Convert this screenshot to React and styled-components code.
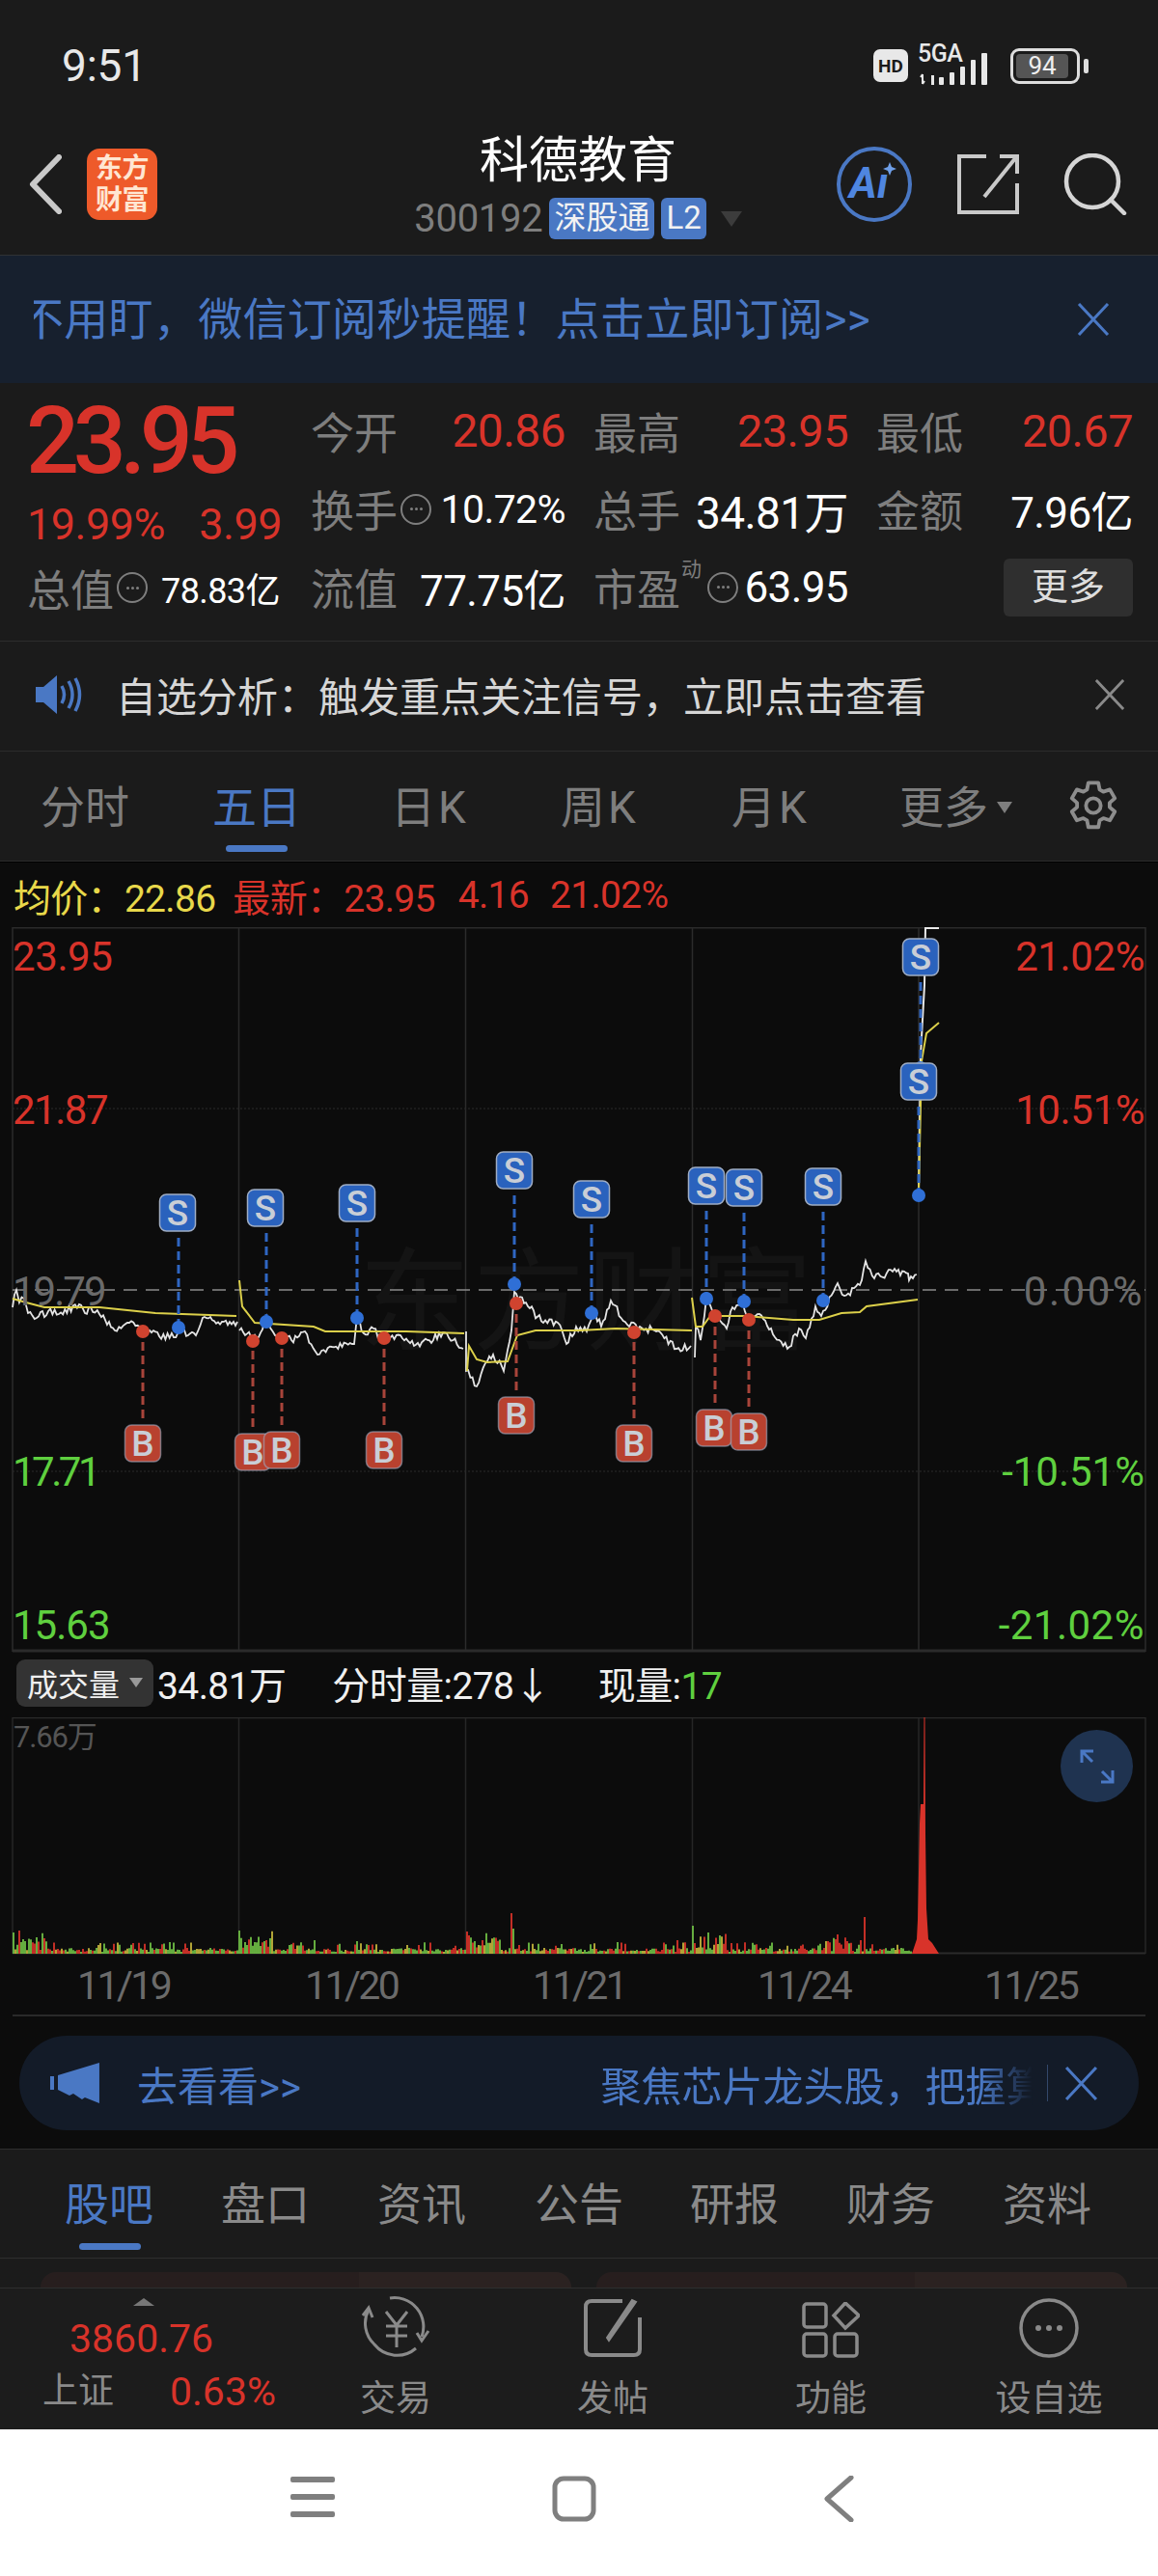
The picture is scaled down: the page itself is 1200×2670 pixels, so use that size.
import React from "react";
import styled, { createGlobalStyle } from "styled-components";

const RED = "#d8332a";
const GREY = "#7e7e7e";
const BLUE = "#4a78c4";
const GREEN = "#5fd03f";
const BAR_GREEN = "#6fbf45";

const Global = createGlobalStyle`
  html, body { margin: 0; padding: 0; background: #fff; }
  * { box-sizing: border-box; }
  body { font-family: Roboto, "Noto Sans CJK SC", sans-serif; }
`;

/* ---------- chart data ---------- */

const rng = (seed) => () => {
  seed = (seed * 16807) % 2147483647;
  return seed / 2147483647;
};

const whiteDays = [
  [[13,1355],[17,1337],[20,1350],[25,1346],[29,1361],[38,1366],[50,1359],[61,1362],[82,1352],[88,1361],[94,1355],[103,1362],[119,1379],[134,1371],[149,1377],[165,1385],[180,1386],[187,1377],[195,1384],[205,1380],[210,1366],[230,1370],[246,1370]],
  [[248,1379],[254,1384],[268,1386],[276,1364],[285,1384],[302,1389],[316,1380],[329,1404],[344,1396],[367,1393],[370,1364],[377,1382],[387,1377],[398,1389],[415,1384],[429,1395],[463,1382],[480,1398]],
  [[483,1380],[483,1421],[494,1437],[505,1411],[511,1404],[522,1421],[530,1379],[533,1339],[547,1354],[563,1371],[578,1371],[587,1393],[597,1375],[608,1380],[615,1359],[623,1375],[633,1348],[650,1373],[663,1375],[680,1380],[701,1398],[716,1395]],
  [[720,1407],[721,1375],[726,1389],[732,1345],[742,1361],[753,1377],[759,1355],[770,1352],[776,1371],[787,1362],[803,1386],[818,1396],[828,1377],[835,1387],[845,1354],[851,1364],[868,1330],[875,1343],[891,1332],[897,1307],[906,1325],[925,1318],[941,1320],[942,1327],[950,1321]],
];

const jagged = (points, seed) => {
  const r = rng(seed);
  const out = [];
  points.forEach((p, i) => {
    out.push(p);
    const next = points[i + 1];
    if (!next) return;
    const steps = Math.floor((next[0] - p[0]) / 2);
    for (let s = 1; s < steps; s++) {
      const t = s / steps;
      out.push([p[0] + (next[0] - p[0]) * t, p[1] + (next[1] - p[1]) * t + (r() - 0.5) * 8]);
    }
  });
  return out.map((p) => p.map((n) => n.toFixed(1)).join(",")).join(" ");
};

const yellowLines = [
  "13,1346 27,1350 46,1355 103,1355 161,1361 245,1364",
  "248,1327 251,1354 264,1371 325,1375 337,1380 421,1380 481,1382",
  "484,1421 486,1395 494,1409 505,1412 526,1411 536,1384 555,1379 600,1379 638,1377 717,1379",
  "717,1345 721,1375 728,1375 736,1364 772,1364 822,1368 849,1368 872,1361 891,1360 898,1354 951,1347",
  "952,1236 955,1100 960,1071 973,1060",
];

const sells = [
  [184,1257,185,1376],[275,1252,276,1370],[370,1247,370,1366],[533,1213,533,1331],[613,1243,613,1361],
  [732,1229,732,1346],[771,1231,771,1349],[853,1230,853,1348],[954,992,954,1107],[952,1121,952,1239],
];
const buys = [
  [148,1496,148,1380],[262,1505,262,1390],[292,1503,292,1387],[398,1503,398,1387],
  [535,1467,535,1351],[657,1496,657,1381],[740,1480,741,1364],[776,1484,776,1368],
];

const volumePeaks = {
  14: [22, BAR_GREEN], 26: [13, BAR_GREEN], 248: [24, BAR_GREEN], 254: [12, BAR_GREEN], 326: [14, BAR_GREEN], 370: [13, BAR_GREEN],
  484: [23, RED], 492: [13, BAR_GREEN], 530: [42, RED], 532: [26, BAR_GREEN], 718: [29, BAR_GREEN], 702: [14, RED],
  734: [22, BAR_GREEN], 868: [20, RED], 896: [38, RED], 892: [14, RED],
};

const volumeBars = () => {
  const r = rng(77);
  const bars = [];
  for (let x = 14; x < 945; x += 2) {
    const peak = volumePeaks[x];
    const day = [14, 248, 484, 717, 850].find((d) => x >= d && x < d + 36);
    const lift = day ? 14 : 0;
    const h = peak ? peak[0] : 2 + r() * 4 + (r() > 0.82 ? 6 : 0) + r() * lift;
    const color = peak ? peak[1] : r() > 0.62 ? RED : r() > 0.3 ? BAR_GREEN : "#c4b53c";
    bars.push({ x, h, color });
  }
  return bars;
};

/* ---------- layout ---------- */

const Page = styled.div`
  width: 1200px;
  height: 2670px;
  overflow: hidden;
  background: #1b1b1b;
  color: #fff;
`;

const StatusBar = styled.div`
  height: 130px;
  padding: 6px 81px 0 64px;
  display: flex;
  align-items: center;
  justify-content: space-between;
`;
const Clock = styled.span`
  font-size: 46px;
  color: #e8e8e8;
  letter-spacing: -0.2px;
`;
const StatusIcons = styled.div`
  display: flex;
  align-items: center;
  gap: 10px;
`;
const HdBadge = styled.span`
  width: 36px;
  height: 34px;
  border-radius: 7px;
  background: #e8e8e8;
  color: #1b1b1b;
  font-size: 19px;
  font-weight: 700;
  display: flex;
  align-items: center;
  justify-content: center;
`;
const Signal = styled.div`
  width: 80px;
  height: 40px;
  position: relative;
`;
const SignalLabel = styled.span`
  position: absolute;
  left: 0;
  top: -5px;
  font-size: 25px;
  font-weight: 500;
  color: #e8e8e8;
  line-height: 26px;
  letter-spacing: -0.5px;
`;
const SignalSvg = styled.svg`
  position: absolute;
  left: 2px;
  top: 6px;
`;
const Battery = styled.div`
  width: 72px;
  height: 37px;
  margin-left: 6px;
  border: 3px solid #ddd;
  border-radius: 9px;
  padding: 3px;
  position: relative;
  &::after {
    content: "";
    position: absolute;
    right: -12px;
    top: 8px;
    width: 5px;
    height: 15px;
    border-radius: 2px;
    background: #ddd;
  }
`;
const BatteryFill = styled.div`
  width: 54px;
  height: 100%;
  border-radius: 4px;
  background: #555;
  color: #eee;
  font-size: 26px;
  line-height: 25px;
  text-align: center;
`;

const Header = styled.header`
  height: 135px;
  padding: 0 32px 13px 30px;
  display: grid;
  grid-template-columns: 1fr auto 1fr;
  align-items: center;
  border-bottom: 1px solid #303234;
`;
const HeaderLeft = styled.div`
  display: flex;
  align-items: center;
  gap: 26px;
`;
const Logo = styled.div`
  width: 73px;
  height: 74px;
  border-radius: 13px;
  background: #ee5a2a;
  color: #ffe6d2;
  font-size: 28px;
  font-weight: 700;
  line-height: 33px;
  text-align: center;
  padding-top: 4px;
  letter-spacing: -0.5px;
`;
const TitleBlock = styled.div`
  display: flex;
  flex-direction: column;
  align-items: center;
  padding-top: 6px;
`;
const Title = styled.div`
  font-size: 51px;
  line-height: 62px;
  color: #fff;
  margin-top: -2px;
`;
const CodeRow = styled.div`
  display: flex;
  align-items: center;
  gap: 7px;
  height: 46px;
  margin-top: 6px;
`;
const Code = styled.span`
  font-size: 40px;
  color: ${GREY};
  letter-spacing: -0.3px;
`;
const Tag = styled.span`
  height: 43px;
  padding: 0 5px;
  border-radius: 6px;
  background: ${BLUE};
  color: #f2f2f2;
  font-size: 33px;
  line-height: 42px;
`;
const Caret = styled.span`
  width: 0;
  height: 0;
  margin-left: ${(p) => p.$gap || 0}px;
  border-left: ${(p) => p.$size}px solid transparent;
  border-right: ${(p) => p.$size}px solid transparent;
  border-top: ${(p) => p.$size * 1.5}px solid ${(p) => p.$color};
`;
const HeaderRight = styled.div`
  display: flex;
  align-items: center;
  justify-content: flex-end;
  gap: 46px;
`;

const SubscribeBar = styled.div`
  height: 132px;
  background: #17202e;
  padding: 0 50px 0 35px;
  display: flex;
  align-items: center;
  justify-content: space-between;
`;
const SubscribeClip = styled.div`
  width: 900px;
  overflow: hidden;
  white-space: nowrap;
`;
const SubscribeText = styled.div`
  margin-left: -15px;
  font-size: 46px;
  line-height: 60px;
  letter-spacing: 0.3px;
  color: ${BLUE};
`;

const Stats = styled.section`
  height: 268px;
  padding: 3px 26px 0 28px;
  display: flex;
  border-bottom: 1px solid #2c2c2c;
`;
const Quote = styled.div`
  width: 294px;
  padding-right: 30px;
  display: flex;
  flex-direction: column;
`;
const BigPrice = styled.div`
  font-size: 97px;
  font-weight: 500;
  line-height: 114px;
  height: 114px;
  margin-left: -1px;
  color: ${RED};
  letter-spacing: -6.5px;
`;
const ChangeRow = styled.div`
  display: flex;
  justify-content: space-between;
  font-size: 45px;
  line-height: 60px;
  height: 60px;
  color: ${RED};
  letter-spacing: -0.5px;
`;
const TotalRow = styled.div`
  display: flex;
  align-items: center;
  gap: 14px;
  height: 70px;
`;
const StatGrid = styled.div`
  flex: 1;
  display: grid;
  grid-template-columns: 264px 264px 266px;
  column-gap: 29px;
  grid-auto-rows: 81px;
  padding-top: 6px;
`;
const Stat = styled.div`
  display: flex;
  align-items: center;
  justify-content: ${(p) => (p.$end ? "flex-end" : "space-between")};
`;
const StatLabel = styled.span`
  display: flex;
  align-items: center;
  font-size: 45px;
  color: ${GREY};
  white-space: nowrap;
  position: relative;
`;
const StatValue = styled.span`
  font-size: ${(p) => p.$size || 44}px;
  color: ${(p) => p.$color || "#fff"};
  letter-spacing: -0.6px;
  white-space: nowrap;
`;
const Superscript = styled.sup`
  position: absolute;
  left: 91px;
  top: 2px;
  font-size: 21px;
  line-height: 24px;
`;
const DotCircle = styled.span`
  width: 32px;
  height: 32px;
  margin-left: ${(p) => p.$gap || 3}px;
  border: 2px solid ${GREY};
  border-radius: 50%;
  flex: none;
  display: inline-flex;
  align-items: center;
  justify-content: center;
  &::before {
    content: "";
    width: 3px;
    height: 3px;
    border-radius: 50%;
    background: ${GREY};
    box-shadow: -5px 0 ${GREY}, 5px 0 ${GREY};
  }
`;
const MoreButton = styled.div`
  width: 134px;
  height: 60px;
  border-radius: 6px;
  background: #2f2f2f;
  color: #ddd;
  font-size: 38px;
  line-height: 58px;
  text-align: center;
`;

const Notice = styled.div`
  height: 114px;
  padding: 0 34px 4px 37px;
  display: flex;
  align-items: center;
  border-bottom: 1px solid #2c2c2c;
`;
const NoticeText = styled.span`
  margin-left: 35px;
  flex: 1;
  font-size: 42px;
  color: #d6d6d6;
`;

const PeriodTabs = styled.nav`
  height: 114px;
  position: relative;
  border-bottom: 1px solid #2c2c2c;
`;
const PeriodTab = styled.span`
  position: absolute;
  left: ${(p) => p.$x}px;
  top: 29px;
  font-size: 46px;
  line-height: 58px;
  letter-spacing: ${(p) => (p.$wide ? 3 : 0)}px;
  color: ${(p) => (p.$active ? BLUE : GREY)};
  white-space: nowrap;
  display: flex;
  align-items: center;
`;
const Underline = styled.span`
  position: absolute;
  left: ${(p) => p.$x}px;
  bottom: ${(p) => p.$bottom}px;
  width: 64px;
  height: 7px;
  border-radius: 4px;
  background: ${BLUE};
`;
const GearSlot = styled.span`
  position: absolute;
  left: 1106px;
  top: 28px;
`;

const ChartPanel = styled.section`
  height: 1334px;
  background: #0c0c0c;
  border-top: 1px solid #000;
`;
const Legend = styled.div`
  height: 67px;
  padding: 1px 0 0 14px;
  display: flex;
  align-items: center;
  font-size: 39px;
  letter-spacing: -0.7px;
  white-space: nowrap;
`;
const LegendItem = styled.span`
  color: ${(p) => p.$color};
  margin-right: ${(p) => p.$gap || 0}px;
`;
const PriceChart = styled.div`
  height: 752px;
  position: relative;
`;
const ChartSvg = styled.svg`
  display: block;
  width: 1200px;
  height: 100%;
  font-family: Roboto, "Noto Sans CJK SC", sans-serif;
`;
const AxisLabel = styled.span`
  position: absolute;
  top: ${(p) => p.$y}px;
  ${(p) => (p.$right ? "right: 14px;" : "left: 13px;")}
  font-size: 42px;
  line-height: 44px;
  letter-spacing: ${(p) => p.$track ?? -0.4}px;
  color: ${(p) => p.$color};
`;
const VolumeHead = styled.div`
  height: 67px;
  padding: 0 0 5px 17px;
  display: flex;
  align-items: center;
  font-size: 39px;
  color: #f0f0f0;
  letter-spacing: -0.6px;
  white-space: nowrap;
`;
const VolumePill = styled.span`
  width: 142px;
  height: 49px;
  border-radius: 9px;
  background: #333;
  font-size: 32px;
  letter-spacing: 0;
  padding-left: 11px;
  margin-right: 4px;
  display: flex;
  align-items: center;
`;
const VolumeItem = styled.span`
  margin-right: ${(p) => p.$gap}px;
`;
const VolumeNow = styled.span`
  color: ${GREEN};
`;
const VolumeChart = styled.div`
  height: 246px;
  position: relative;
`;
const VolumeMax = styled.span`
  position: absolute;
  left: 14px;
  top: -5px;
  font-size: 31px;
  letter-spacing: -1.2px;
  color: #555;
`;
const ExpandButton = styled.span`
  position: absolute;
  left: 1099px;
  top: 13px;
  width: 75px;
  height: 75px;
  border-radius: 50%;
  background: #1f3350;
  display: flex;
  align-items: center;
  justify-content: center;
`;
const DateRow = styled.div`
  height: 64px;
  margin: 0 13px;
  border-bottom: 2px solid #2a2a2a;
  position: relative;
`;
const DateLabel = styled.span`
  position: absolute;
  left: ${(p) => p.$x - 13}px;
  top: 8px;
  font-size: 41px;
  line-height: 48px;
  letter-spacing: -2.6px;
  color: #6b6b6b;
`;
const AdPill = styled.div`
  height: 98px;
  margin: 20px 20px 19px;
  padding: 0 42px 0 32px;
  border-radius: 49px;
  background: #131b28;
  display: flex;
  align-items: center;
`;
const AdLink = styled.span`
  margin-left: 38px;
  width: 481px;
  font-size: 42px;
  color: ${BLUE};
`;
const AdClip = styled.div`
  width: 448px;
  overflow: hidden;
  white-space: nowrap;
  font-size: 42px;
  color: ${BLUE};
  mask-image: linear-gradient(to right, #000 88%, transparent);
`;
const AdDivider = styled.span`
  width: 1px;
  height: 38px;
  margin: 0 17px 0 15px;
  background: #33486a;
`;

const InfoTabs = styled.nav`
  height: 114px;
  position: relative;
  border-top: 1px solid #2e2e2e;
  border-bottom: 1px solid #2e2e2e;
`;
const InfoTab = styled.span`
  position: absolute;
  left: ${(p) => p.$x}px;
  top: 28px;
  font-size: 46px;
  line-height: 58px;
  color: ${(p) => (p.$active ? BLUE : "#8a8a8a")};
`;
const CardPeek = styled.div`
  height: 30px;
  padding: 14px 32px 0 42px;
  display: flex;
  gap: 26px;
`;
const PeekCard = styled.div`
  flex: 1;
  border-radius: 26px 26px 0 0;
  background: linear-gradient(to right, #271e1e 60%, #2b2221 60%);
`;
const BottomBar = styled.footer`
  height: 147px;
  background: #1c1c1c;
  border-top: 1px solid #2e2e2e;
  position: relative;
  display: flex;
`;
const IndexBlock = styled.div`
  width: 334px;
  flex: none;
  position: relative;
`;
const IndexArrow = styled.span`
  position: absolute;
  left: 138px;
  top: 10px;
  border-left: 11px solid transparent;
  border-right: 11px solid transparent;
  border-bottom: 8px solid #777;
`;
const IndexValue = styled.span`
  position: absolute;
  left: 72px;
  top: 27px;
  font-size: 41px;
  line-height: 50px;
  color: ${RED};
`;
const IndexName = styled.span`
  position: absolute;
  left: 44px;
  top: 84px;
  font-size: 37px;
  line-height: 46px;
  color: #8a8a8a;
`;
const IndexPct = styled.span`
  position: absolute;
  left: 176px;
  top: 84px;
  font-size: 41px;
  line-height: 46px;
  color: ${RED};
`;
const ActionItem = styled.div`
  position: absolute;
  left: ${(p) => p.$x}px;
  top: -3px;
  width: 200px;
  margin-left: -100px;
  display: flex;
  flex-direction: column;
  align-items: center;
  font-size: 37px;
  color: #8a8a8a;
`;
const ActionIcon = styled.span`
  height: 87px;
  display: flex;
  align-items: flex-end;
  padding-bottom: 12px;
`;
const SystemNav = styled.div`
  height: 153px;
  background: #fff;
  position: relative;
`;
const NavSlot = styled.span`
  position: absolute;
  left: ${(p) => p.$x}px;
  top: ${(p) => p.$y}px;
  display: flex;
`;

/* ---------- drawings ---------- */

const Cross = ({ size, color, width = 3 }) => (
  <svg width={size} height={size} viewBox="0 0 34 34" fill="none" stroke={color} strokeWidth={width}>
    <path d="M2 1 L32 33 M32 1 L2 33" />
  </svg>
);

const BackIcon = () => (
  <svg width="34" height="62" viewBox="0 0 34 62" fill="none" stroke="#c9c9c9" strokeWidth="6" strokeLinecap="round" strokeLinejoin="round">
    <path d="M31 3 L4 31 L31 59" />
  </svg>
);

const AiIcon = () => (
  <svg width="80" height="80" viewBox="0 0 80 80">
    <circle cx="40" cy="40" r="37" fill="none" stroke={BLUE} strokeWidth="4" />
    <text x="14" y="54" fontSize="44" fontWeight="700" fontStyle="italic" fill="#4f86e0" fontFamily="Roboto">Aı</text>
    <path d="M56 17 l2 5 l5 2 l-5 2 l-2 5 l-2 -5 l-5 -2 l5 -2z" fill="#6f9fe8" />
  </svg>
);

const ShareIcon = () => (
  <svg width="64" height="62" viewBox="0 0 64 62" fill="none" stroke="#c9c9c9" strokeWidth="4">
    <path d="M30 2 H2 V60 H62 V30 M62 20 V2 H44 M61 3 L28 44" />
  </svg>
);

const SearchIcon = () => (
  <svg width="66" height="64" viewBox="0 0 66 64" fill="none" stroke="#d5d5d5" strokeWidth="4.5" strokeLinecap="round">
    <circle cx="30" cy="29" r="27" />
    <path d="M49 48 L63 62" />
  </svg>
);

const SignalBars = () => (
  <SignalSvg width="78" height="36" viewBox="0 0 78 36" fill="#e8e8e8">
    <path d="M3 23 v10 M3 23 l-2 3 M3 33 l2 -3" stroke="#e8e8e8" strokeWidth="2" />
    <rect x="12" y="24" width="3" height="10" />
    <rect x="20" y="26" width="5" height="8" rx="1" />
    <rect x="31" y="21" width="5" height="13" rx="1" />
    <rect x="42" y="15" width="5" height="19" rx="1" />
    <rect x="53" y="8" width="5" height="26" rx="1" />
    <rect x="64" y="1" width="6" height="33" rx="1" />
  </SignalSvg>
);

const SpeakerIcon = () => (
  <svg width="48" height="40" viewBox="0 0 48 40" fill={BLUE}>
    <path d="M0 12 H8 L22 0 V40 L8 28 H0 Z" />
    <path d="M27 11 Q32 20 27 29 M34 6 Q42 20 34 34 M41 3 Q50 20 41 37" fill="none" stroke={BLUE} strokeWidth="3.5" />
  </svg>
);

const GearIcon = () => (
  <svg width="54" height="56" viewBox="0 0 24 24" fill="none" stroke="#8d8d8d" strokeWidth="1.7" strokeLinejoin="round">
    <path d="M9.7 1.5h4.6l.6 3.1 1.7 1 3-1 2.3 4-2.4 2.1v2l2.4 2.1-2.3 4-3-1-1.7 1-.6 3.1H9.7l-.6-3.1-1.7-1-3 1-2.3-4 2.4-2.1v-2L2.1 8.6l2.3-4 3 1 1.7-1z" />
    <circle cx="12" cy="12" r="3.4" />
  </svg>
);

const ExpandIcon = () => (
  <svg width="38" height="38" viewBox="0 0 38 38" fill="none" stroke={BLUE} strokeWidth="3">
    <path d="M3 15 V3 H15 M3 3 L14 14 M35 23 V35 H23 M35 35 L24 24" />
  </svg>
);

const MegaphoneIcon = () => (
  <svg width="52" height="42" viewBox="0 0 52 42" fill={BLUE}>
    <rect x="0" y="14" width="4" height="14" />
    <path d="M8 13 L51 0 V42 L36 36 L33 38 L24 32 L20 34 L8 28 Z" />
  </svg>
);

const TradeIcon = () => (
  <svg width="72" height="64" viewBox="0 0 72 64" fill="none" stroke="#8a8a8a" strokeWidth="3">
    <path d="M30 2 A30 30 0 0 1 63 42 M57 54 A30 30 0 0 1 14 50 A30 30 0 0 1 8 14" />
    <path d="M2 20 L8 12 L12 22 M70 36 L63 46 L58 38" />
    <path d="M26 16 L37 30 L48 16 M26 31 H48 M26 41 H48 M37 30 V53" />
  </svg>
);

const PostIcon = () => (
  <svg width="60" height="62" viewBox="0 0 60 62" fill="none" stroke="#8a8a8a" strokeWidth="4">
    <path d="M40 3 H8 Q2 3 2 9 V53 Q2 59 8 59 H52 Q58 59 58 53 V20" />
    <path d="M54 4 L26 44 L24 41 L50 2 Z" fill="#8a8a8a" strokeWidth="2" />
  </svg>
);

const AppsIcon = () => (
  <svg width="60" height="58" viewBox="0 0 60 58" fill="none" stroke="#8a8a8a" strokeWidth="3.5">
    <rect x="2" y="2" width="23" height="24" rx="3" />
    <path d="M45 1 L59 14 L45 27 L33 14 Z" />
    <rect x="2" y="33" width="23" height="23" rx="3" />
    <rect x="34" y="33" width="23" height="23" rx="3" />
  </svg>
);

const MoreIcon = () => (
  <svg width="62" height="62" viewBox="0 0 62 62" fill="none" stroke="#8a8a8a" strokeWidth="3.5">
    <circle cx="31" cy="31" r="29" />
    <g fill="#8a8a8a" stroke="none">
      <circle cx="20" cy="31" r="3" />
      <circle cx="31" cy="31" r="3" />
      <circle cx="42" cy="31" r="3" />
    </g>
  </svg>
);

const Menu = () => (
  <svg width="46" height="48" viewBox="0 0 46 48" fill="#7f7f7f">
    <rect y="0" width="46" height="6" rx="2" />
    <rect y="18" width="46" height="6" rx="2" />
    <rect y="36" width="46" height="6" rx="2" />
  </svg>
);
const HomeKey = () => (
  <svg width="46" height="48" viewBox="0 0 46 48" fill="none" stroke="#7f7f7f" strokeWidth="5">
    <rect x="3" y="3" width="40" height="42" rx="9" />
  </svg>
);
const BackKey = () => (
  <svg width="32" height="48" viewBox="0 0 32 48" fill="none" stroke="#7f7f7f" strokeWidth="5" strokeLinecap="round" strokeLinejoin="round">
    <path d="M29 2 L4 24 L29 46" />
  </svg>
);

const Marker = ({ item, kind }) => {
  const [bx, by, dx, dy] = item;
  const sell = kind === "S";
  const fill = sell ? "#2a62bd" : "#b8412f";
  const line = sell ? "#2f66c2" : "#a8443a";
  const from = sell ? by + 26 : by - 26;
  return (
    <g>
      <line x1={dx} y1={from} x2={dx} y2={dy} stroke={line} strokeWidth="3" strokeDasharray="9 5" />
      <circle cx={dx} cy={dy} r="7" fill={sell ? "#2f6fd6" : "#d0432f"} />
      <rect x={bx - 18.5} y={by - 19} width="37" height="38" rx="7" fill={fill} stroke="#9fadc4" strokeOpacity={sell ? 1 : 0.6} strokeWidth="1.5" />
      <text x={bx} y={by + 13} textAnchor="middle" fontSize="37" fontWeight="500" fill="#c9ced6">{kind}</text>
    </g>
  );
};

const gridX = [13, 247.5, 482.5, 717.5, 952, 1187];

const PriceLines = () => (
  <ChartSvg viewBox="0 961 1200 752">
    <text x="372" y="1390" fontSize="116" fill="#141414" letterSpacing="2">东方财富</text>
    {gridX.map((x) => (
      <line key={x} x1={x} y1="961" x2={x} y2="1712" stroke="#2b2b2b" strokeWidth="1.5" />
    ))}
    <line x1="13" y1="961.5" x2="1187" y2="961.5" stroke="#2b2b2b" strokeWidth="2" />
    <line x1="13" y1="1711" x2="1187" y2="1711" stroke="#2b2b2b" strokeWidth="3" />
    <line x1="13" y1="1149" x2="1187" y2="1149" stroke="#2a2a2a" strokeDasharray="2 2" />
    <line x1="13" y1="1525" x2="1187" y2="1525" stroke="#2a2a2a" strokeDasharray="2 2" />
    <line x1="13" y1="1337" x2="1187" y2="1337" stroke="#8a8a8a" strokeWidth="1.5" strokeDasharray="14 9" />
    {whiteDays.map((day, i) => (
      <polyline key={i} points={jagged(day, 31 + i * 17)} fill="none" stroke="#e4e4e4" strokeWidth="1.8" />
    ))}
    <polyline points="952,1232 954,1093 958,1021 959,962 973,962" fill="none" stroke="#e8e8e8" strokeWidth="2" />
    {yellowLines.map((pts, i) => (
      <polyline key={i} points={pts} fill="none" stroke="#dcd04a" strokeWidth="2" />
    ))}
    {buys.map((b) => <Marker key={b[0]} item={b} kind="B" />)}
    {sells.map((s) => <Marker key={s[0] + s[1]} item={s} kind="S" />)}
  </ChartSvg>
);

const VolumeBars = () => {
  const bars = volumeBars();
  return (
    <ChartSvg viewBox="0 1780 1200 246">
      {gridX.map((x) => (
        <line key={x} x1={x} y1="1780" x2={x} y2="2025" stroke="#262626" strokeWidth="1.5" />
      ))}
      <line x1="13" y1="1780.5" x2="1187" y2="1780.5" stroke="#2b2b2b" strokeWidth="1.5" />
      <line x1="13" y1="2024.5" x2="1187" y2="2024.5" stroke="#2b2b2b" strokeWidth="2" />
      {bars.map((b) => (
        <line key={b.x} x1={b.x} y1="2025" x2={b.x} y2={2025 - b.h} stroke={b.color} strokeWidth="1.8" />
      ))}
      <polygon
        points="945,2025 950,2010 951,1990 953,1890 954,1870 957,1870 957.5,1780 958.5,1780 959,1900 960,1978 962,2010 966,2014 973,2025"
        fill={RED}
      />
    </ChartSvg>
  );
};

/* ---------- page ---------- */

const periods = [
  ["分时", 42], ["五日", 220, true], ["日K", 405, false, true], ["周K", 581, false, true], ["月K", 758, false, true],
];
const infoTabs = [
  ["股吧", 67, true], ["盘口", 229], ["资讯", 391], ["公告", 554], ["研报", 715], ["财务", 877], ["资料", 1039],
];
const dates = [["11/19", 80], ["11/20", 316], ["11/21", 552], ["11/24", 785], ["11/25", 1020]];
const actions = [
  ["交易", 410, <TradeIcon key="t" />],
  ["发帖", 635, <PostIcon key="p" />],
  ["功能", 861, <AppsIcon key="a" />],
  ["设自选", 1087, <MoreIcon key="m" />],
];

export default function App() {
  return (
    <Page>
      <Global />
      <StatusBar>
        <Clock>9:51</Clock>
        <StatusIcons>
          <HdBadge>HD</HdBadge>
          <Signal>
            <SignalLabel>5GA</SignalLabel>
            <SignalBars />
          </Signal>
          <Battery>
            <BatteryFill>94</BatteryFill>
          </Battery>
        </StatusIcons>
      </StatusBar>

      <Header>
        <HeaderLeft>
          <BackIcon />
          <Logo>东方<br />财富</Logo>
        </HeaderLeft>
        <TitleBlock>
          <Title>科德教育</Title>
          <CodeRow>
            <Code>300192</Code>
            <Tag>深股通</Tag>
            <Tag>L2</Tag>
            <Caret $size={11} $color="#3c3c3c" $gap={8} />
          </CodeRow>
        </TitleBlock>
        <HeaderRight>
          <AiIcon />
          <ShareIcon />
          <SearchIcon />
        </HeaderRight>
      </Header>

      <SubscribeBar>
        <SubscribeClip>
          <SubscribeText>不用盯，微信订阅秒提醒！点击立即订阅&gt;&gt;</SubscribeText>
        </SubscribeClip>
        <Cross size={34} color={BLUE} />
      </SubscribeBar>

      <Stats>
        <Quote>
          <BigPrice>23.95</BigPrice>
          <ChangeRow>
            <span>19.99%</span>
            <span>3.99</span>
          </ChangeRow>
          <TotalRow>
            <StatLabel>总值<DotCircle /></StatLabel>
            <StatValue $size={36}>78.83亿</StatValue>
          </TotalRow>
        </Quote>
        <StatGrid>
          <Stat><StatLabel>今开</StatLabel><StatValue $size={48} $color={RED}>20.86</StatValue></Stat>
          <Stat><StatLabel>最高</StatLabel><StatValue $size={47} $color={RED}>23.95</StatValue></Stat>
          <Stat><StatLabel>最低</StatLabel><StatValue $size={47} $color={RED}>20.67</StatValue></Stat>
          <Stat><StatLabel>换手<DotCircle /></StatLabel><StatValue $size={41}>10.72%</StatValue></Stat>
          <Stat><StatLabel>总手</StatLabel><StatValue $size={46}>34.81万</StatValue></Stat>
          <Stat><StatLabel>金额</StatLabel><StatValue>7.96亿</StatValue></Stat>
          <Stat><StatLabel>流值</StatLabel><StatValue>77.75亿</StatValue></Stat>
          <Stat>
            <StatLabel>市盈<Superscript>动</Superscript><DotCircle $gap={28} /></StatLabel>
            <StatValue>63.95</StatValue>
          </Stat>
          <Stat $end><MoreButton>更多</MoreButton></Stat>
        </StatGrid>
      </Stats>

      <Notice>
        <SpeakerIcon />
        <NoticeText>自选分析：触发重点关注信号，立即点击查看</NoticeText>
        <Cross size={32} color="#8a8a8a" />
      </Notice>

      <PeriodTabs>
        {periods.map(([label, x, active, wide]) => (
          <PeriodTab key={label} $x={x} $active={active} $wide={wide}>{label}</PeriodTab>
        ))}
        <PeriodTab $x={932}>更多<Caret $size={8} $color={GREY} $gap={9} /></PeriodTab>
        <Underline $x={234} $bottom={9} />
        <GearSlot><GearIcon /></GearSlot>
      </PeriodTabs>

      <ChartPanel>
        <Legend>
          <LegendItem $color="#e8d84a" $gap={18}>均价：22.86</LegendItem>
          <LegendItem $color={RED} $gap={24}>最新：23.95</LegendItem>
          <LegendItem $color={RED} $gap={22}>4.16</LegendItem>
          <LegendItem $color={RED}>21.02%</LegendItem>
        </Legend>

        <PriceChart>
          <PriceLines />
          <AxisLabel $y={9} $color={RED}>23.95</AxisLabel>
          <AxisLabel $y={168} $track={-1.5} $color={RED}>21.87</AxisLabel>
          <AxisLabel $y={356} $track={-2} $color="#6a6a6a">19.79</AxisLabel>
          <AxisLabel $y={543} $track={-3.5} $color={GREEN}>17.71</AxisLabel>
          <AxisLabel $y={702} $track={-1} $color={GREEN}>15.63</AxisLabel>
          <AxisLabel $y={9} $right $color={RED}>21.02%</AxisLabel>
          <AxisLabel $y={168} $right $color={RED}>10.51%</AxisLabel>
          <AxisLabel $y={356} $right $track={2.5} $color="#6a6a6a">0.00%</AxisLabel>
          <AxisLabel $y={543} $right $track={0} $color={GREEN}>-10.51%</AxisLabel>
          <AxisLabel $y={702} $right $track={0.5} $color={GREEN}>-21.02%</AxisLabel>
        </PriceChart>

        <VolumeHead>
          <VolumePill>成交量<Caret $size={7} $color="#999" $gap={10} /></VolumePill>
          <VolumeItem $gap={48}>34.81万</VolumeItem>
          <VolumeItem $gap={49}>分时量:278↓</VolumeItem>
          <VolumeItem $gap={0}>现量:<VolumeNow>17</VolumeNow></VolumeItem>
        </VolumeHead>

        <VolumeChart>
          <VolumeBars />
          <VolumeMax>7.66万</VolumeMax>
          <ExpandButton><ExpandIcon /></ExpandButton>
        </VolumeChart>

        <DateRow>
          {dates.map(([d, x]) => <DateLabel key={d} $x={x}>{d}</DateLabel>)}
        </DateRow>

        <AdPill>
          <MegaphoneIcon />
          <AdLink>去看看&gt;&gt;</AdLink>
          <AdClip>聚焦芯片龙头股，把握算力</AdClip>
          <AdDivider />
          <Cross size={35} color={BLUE} />
        </AdPill>
      </ChartPanel>

      <InfoTabs>
        {infoTabs.map(([label, x, active]) => (
          <InfoTab key={label} $x={x} $active={active}>{label}</InfoTab>
        ))}
        <Underline $x={82} $bottom={8} />
      </InfoTabs>
      <CardPeek>
        <PeekCard />
        <PeekCard />
      </CardPeek>

      <BottomBar>
        <IndexBlock>
          <IndexArrow />
          <IndexValue>3860.76</IndexValue>
          <IndexName>上证</IndexName>
          <IndexPct>0.63%</IndexPct>
        </IndexBlock>
        {actions.map(([label, x, icon]) => (
          <ActionItem key={label} $x={x}>
            <ActionIcon>{icon}</ActionIcon>
            {label}
          </ActionItem>
        ))}
      </BottomBar>

      <SystemNav>
        <NavSlot $x={301} $y={49}><Menu /></NavSlot>
        <NavSlot $x={572} $y={48}><HomeKey /></NavSlot>
        <NavSlot $x={853} $y={48}><BackKey /></NavSlot>
      </SystemNav>
    </Page>
  );
}
